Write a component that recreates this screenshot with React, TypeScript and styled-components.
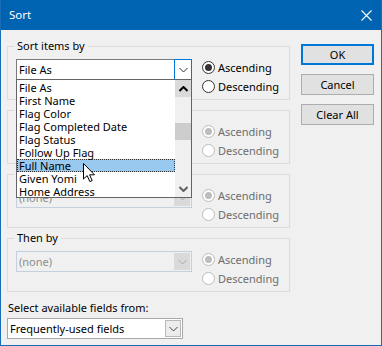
import React from "react";
import styled, { createGlobalStyle, css } from "styled-components";

const GlobalStyle = createGlobalStyle`
  html, body { margin: 0; padding: 0; background: #f0f0f0; }
  body { font-family: "Noto Sans", "Segoe UI", sans-serif; font-size: 11px; }
`;

const fields = [
    "File As", "First Name", "Flag Color", "Flag Completed Date", "Flag Status",
    "Follow Up Flag", "Full Name", "Given Yomi", "Home Address",
];

const Window = styled.div`
  width: 382px; height: 346px; box-sizing: border-box;
  border: 1px solid #1b6cb8; border-top: none;
  background: #f0f0f0;
  display: flex; flex-direction: column;
  font-family: "Noto Sans", "Segoe UI", sans-serif; font-size: 11px; color: #000;
  overflow: hidden;
`;

const TitleBar = styled.div`
  height: 30px; flex: none;
  background: #0063b1; color: #fff;
  display: flex; align-items: center; justify-content: space-between;
  margin: 0 -1px;
  padding: 0 10px 0 9px;
`;

const Title = styled.div`
  font-size: 11.5px; line-height: 16px;
`;

const Body = styled.div`
  padding: 8px 7px 0 6px;
  display: flex; flex-direction: column;
`;

const TopArea = styled.div`
  display: flex; gap: 11px; align-items: flex-start;
`;

const Groups = styled.div`
  width: 284px; display: flex; flex-direction: column; gap: 2px;
`;

const Buttons = styled.div`
  margin-top: 6px; width: 73px;
  display: flex; flex-direction: column; gap: 9px;
`;

const Button = styled.button<{ $default?: boolean }>`
  height: 21px; width: 73px; box-sizing: border-box;
  background: #e1e1e1; border: 1px solid #adadad; border-radius: 0;
  font: 11px "Noto Sans", "Segoe UI", sans-serif; color: #000;
  padding: 0;
  ${p => p.$default && css`border: 2px solid #0078d7;`}
`;

const Group = styled.fieldset`
  margin: 0; padding: 0 8px; min-width: 0;
  height: 62px; box-sizing: border-box;
  border: 1px solid #dcdcdc;
`;

const Legend = styled.legend`
  padding: 0 3px; margin-left: -2px;
  font-size: 11px; line-height: 16px; color: #000;
`;

const GroupRow = styled.div`
  display: flex; gap: 10px; align-items: flex-start; margin-top: 4px;
`;

const ComboWrap = styled.div`
  position: relative; margin-top: 1px;
`;

const Combo = styled.div<{ $disabled?: boolean; $plain?: boolean }>`
  width: 176px; height: 21px; box-sizing: border-box;
  border: 1px solid #7a7a7a; background: #fff;
  display: flex; align-items: stretch;
  ${p => p.$plain && css`border-color: #a9a9a9;`}
  ${p => p.$disabled && css`
    border-color: #c3d0de;
    background: #f0f0f0;
    color: #8d8d8d;
  `}
`;

const ComboText = styled.div`
  flex: 1; padding-left: 2px; line-height: 19px; white-space: nowrap;
`;

const DropButton = styled.div<{ $variant: "focus" | "normal" | "disabled" }>`
  width: 17px; box-sizing: border-box;
  display: flex; align-items: center; justify-content: center;
  ${p => p.$variant === "focus" && css`
    border: 1px solid #0078d7; margin: -1px -1px -1px 0; width: 18px; background: #fff;
  `}
  ${p => p.$variant === "normal" && css`
    border: 1px solid #b8b8b8; margin: 1px; background: #ececec; width: 16px;
  `}
  ${p => p.$variant === "disabled" && css`
    background: #dadada; margin: 1px 1px 1px 0; width: 16px;
  `}
`;

const Radios = styled.div`
  display: flex; flex-direction: column;
`;

const RadioRow = styled.div<{ $disabled?: boolean }>`
  height: 19px; display: flex; align-items: center; gap: 3px;
  color: ${p => (p.$disabled ? "#6d6d6d" : "#000")};
`;

const RadioCircle = styled.span<{ $checked?: boolean; $disabled?: boolean }>`
  width: 13px; height: 13px; box-sizing: border-box; border-radius: 50%;
  border: 1px solid ${p => (p.$disabled ? "#bcbcbc" : "#333")};
  background: #fff;
  display: flex; align-items: center; justify-content: center;
  &::after {
    content: "";
    width: 7px; height: 7px; border-radius: 50%;
    background: ${p => (p.$disabled ? "#bcbcbc" : "#333")};
    display: ${p => (p.$checked ? "block" : "none")};
  }
`;

const ListPopup = styled.div`
  position: absolute; left: 0; top: calc(100% - 1px); z-index: 10;
  width: 176px; height: 119px; box-sizing: border-box;
  border: 1px solid #646464; background: #fff;
  display: flex;
`;

const ListItems = styled.div`
  flex: 1; padding-top: 1px;
`;

const ListItem = styled.div<{ $selected?: boolean }>`
  height: 13px; line-height: 13px; padding-left: 2px; white-space: nowrap;
  box-sizing: border-box;
  ${p => p.$selected && css`
    background: #99c9ef; outline: 1px dotted #333; outline-offset: -1px;
  `}
`;

const Scrollbar = styled.div`
  width: 16px; background: #f0f0f0;
  display: flex; flex-direction: column;
`;

const ScrollArrow = styled.div<{ $hover?: boolean }>`
  height: 17px; display: flex; align-items: center; justify-content: center;
  background: ${p => (p.$hover ? "#dadada" : "transparent")};
`;

const Track = styled.div`
  flex: 1; display: flex; flex-direction: column; padding-top: 26px;
`;

const Thumb = styled.div`
  height: 17px; background: #cdcdcd;
`;

const Cursor = styled.svg`
  position: absolute; left: 66px; top: 83px; z-index: 11;
`;

const FieldsLabel = styled.div`
  margin-top: 8px; padding-left: 1px; line-height: 16px;
`;

const FieldsCombo = styled.div`
  margin-top: 2px;
`;

const Chevron = ({ color = "#333", up = false, bold = false }: { color?: string; up?: boolean; bold?: boolean }) => (
    <svg width="9" height="6" viewBox="0 0 9 6">
        <polyline
            points={up ? "0.5,5 4.5,1 8.5,5" : "0.5,1 4.5,5 8.5,1"}
            fill="none" stroke={color} strokeWidth={bold ? 2 : 1}
        />
    </svg>
);

type RadioPairProps = { disabled?: boolean };
const RadioPair = ({ disabled }: RadioPairProps) => (
    <Radios>
        <RadioRow $disabled={disabled}><RadioCircle $checked $disabled={disabled} />Ascending</RadioRow>
        <RadioRow $disabled={disabled}><RadioCircle $disabled={disabled} />Descending</RadioRow>
    </Radios>
);

const DisabledGroup = ({ label }: { label: string }) => (
    <Group>
        <Legend>{label}</Legend>
        <GroupRow>
            <ComboWrap>
                <Combo $disabled>
                    <ComboText>(none)</ComboText>
                    <DropButton $variant="disabled"><Chevron color="#a8a8a8" /></DropButton>
                </Combo>
            </ComboWrap>
            <RadioPair disabled />
        </GroupRow>
    </Group>
);

export default function App() {
    return <>
        <GlobalStyle />
        <Window>
            <TitleBar>
                <Title>Sort</Title>
                <svg width="11" height="11" viewBox="0 0 11 11">
                    <path d="M0.5 0.5 L10.5 10.5 M10.5 0.5 L0.5 10.5" stroke="#fff" strokeWidth="1.1" />
                </svg>
            </TitleBar>
            <Body>
                <TopArea>
                    <Groups>
                        <Group>
                            <Legend>Sort items by</Legend>
                            <GroupRow>
                                <ComboWrap>
                                    <Combo>
                                        <ComboText>File As</ComboText>
                                        <DropButton $variant="focus"><Chevron /></DropButton>
                                    </Combo>
                                    <ListPopup>
                                        <ListItems>
                                            {fields.map(f => (
                                                <ListItem key={f} $selected={f === "Full Name"}>{f}</ListItem>
                                            ))}
                                        </ListItems>
                                        <Scrollbar>
                                            <ScrollArrow $hover><Chevron color="#000" up bold /></ScrollArrow>
                                            <Track><Thumb /></Track>
                                            <ScrollArrow><Chevron color="#606060" bold /></ScrollArrow>
                                        </Scrollbar>
                                        <Cursor width="13" height="20" viewBox="0 0 13 20">
                                            <path d="M0.5 0.5 L0.5 16 L4.2 12.6 L6.8 18.6 L9.2 17.6 L6.6 11.8 L11.5 11.8 Z"
                                                  fill="#fff" stroke="#000" strokeWidth="1" strokeLinejoin="miter" />
                                        </Cursor>
                                    </ListPopup>
                                </ComboWrap>
                                <RadioPair />
                            </GroupRow>
                        </Group>
                        <DisabledGroup label="Then by" />
                        <DisabledGroup label="Then by" />
                        <DisabledGroup label="Then by" />
                    </Groups>
                    <Buttons>
                        <Button $default>OK</Button>
                        <Button>Cancel</Button>
                        <Button>Clear All</Button>
                    </Buttons>
                </TopArea>
                <FieldsLabel>Select available fields from:</FieldsLabel>
                <FieldsCombo>
                    <Combo $plain>
                        <ComboText>Frequently-used fields</ComboText>
                        <DropButton $variant="normal"><Chevron color="#444" /></DropButton>
                    </Combo>
                </FieldsCombo>
            </Body>
        </Window>
    </>;
}
